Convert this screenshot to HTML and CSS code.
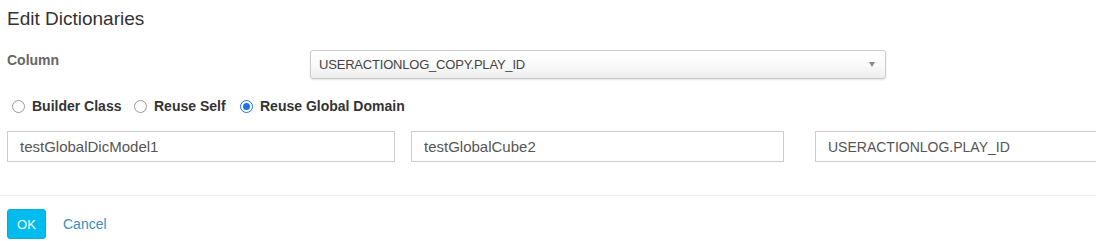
FILE: index.html
```html
<!DOCTYPE html>
<html>
<head>
<meta charset="utf-8">
<link rel="stylesheet" href="styles.css">
</head>
<body>
<div class="modal">
  <div class="header">Edit Dictionaries</div>
  <div class="body">
    <div class="row-column">
      <label class="col-label">Column</label>
      <div class="select">
        <span>USERACTIONLOG_COPY.PLAY_ID</span>
        <span class="caret"></span>
      </div>
    </div>
    <div class="radios">
      <label class="radio r1"><span class="circle"></span>Builder Class</label>
      <label class="radio r2"><span class="circle"></span>Reuse Self</label>
      <label class="radio"><span class="circle checked"></span>Reuse Global Domain</label>
    </div>
    <div class="inputs">
      <div class="input w1">testGlobalDicModel1</div>
      <div class="input w2">testGlobalCube2</div>
      <div class="input w3">USERACTIONLOG.PLAY_ID</div>
    </div>
  </div>
  <div class="footer">
    <button class="btn-ok">OK</button>
    <a class="cancel">Cancel</a>
  </div>
</div>
</body>
</html>
```

FILE: styles.css
```css
html, body { margin: 0; padding: 0; background: #fff; }
body { font-family: "Liberation Sans", Arial, sans-serif; color: #333; overflow: hidden; width: 1096px; height: 241px; }
.modal { width: 1096px; overflow: hidden; }
.header { font-size: 19px; color: #333; padding: 9px 7px 0 7px; height: 24px; line-height: 20px; }
.body { padding: 0 0 0 7px; }
.row-column { display: flex; align-items: center; margin-top: 17px; height: 29px; }
.col-label { width: 303px; flex: none; font-size: 14px; font-weight: bold; color: #666; margin-top: -9px; }
.select { width: 556px; flex: none; height: 27px; border: 1px solid #ccc; border-radius: 3px; box-shadow: 0 1px 2px rgba(0,0,0,0.12); background: linear-gradient(#fff 0%, #fafafa 50%, #eee 100%); display: flex; align-items: center; justify-content: space-between; padding: 0 10px 0 8px; box-sizing: content-box; font-size: 13px; letter-spacing: -0.2px; color: #444; }
.caret { width: 0; height: 0; border-left: 3px solid transparent; border-right: 3px solid transparent; border-top: 5px solid #888; }
.radios { display: flex; align-items: center; margin-top: 12px; height: 30px; }
.radio { display: flex; align-items: center; font-size: 14px; font-weight: bold; color: #333; flex: none; }
.r1 { width: 122px; }
.r2 { width: 106px; }
.circle { width: 11px; height: 11px; border: 1px solid #999; border-radius: 50%; margin: 0 7px 0 5px; box-sizing: content-box; background: #fff; position: relative; }
.circle.checked { border-color: #1a73e8; }
.circle.checked::after { content: ""; position: absolute; left: 2px; top: 2px; width: 7px; height: 7px; border-radius: 50%; background: #1a73e8; }
.inputs { display: flex; margin-top: 10px; }
.input { flex: none; height: 31px; border: 1px solid #ccc; font-size: 15px; color: #555; display: flex; align-items: center; padding-left: 12px; box-sizing: border-box; }
.w1 { width: 388px; margin-right: 16px; }
.w2 { width: 373px; margin-right: 31px; }
.w3 { width: 300px; font-size: 14px; }
.footer { border-top: 1px solid #eee; margin-top: 33px; padding: 13px 7px 0 7px; display: flex; align-items: center; }
.btn-ok { width: 39px; height: 30px; background: #00bbee; border: 1px solid #00aedd; border-radius: 3px; color: #fff; font-family: "Liberation Sans", Arial, sans-serif; font-size: 13px; padding: 0; }
.cancel { color: #3c8dbc; font-size: 14px; margin-left: 17px; }
```
